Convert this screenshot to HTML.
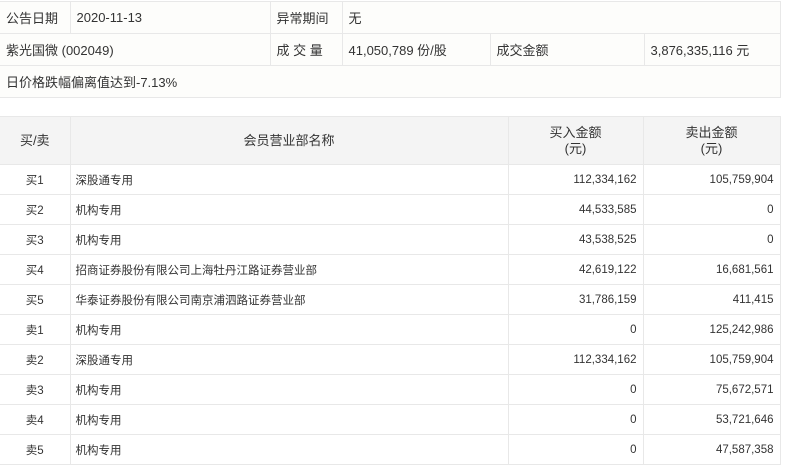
<!DOCTYPE html>
<html><head><meta charset="utf-8"><style>
body{margin:0;background:#fff;width:787px;height:470px;overflow:hidden;font-family:"Liberation Sans","Noto Sans CJK SC",sans-serif;color:#333;}
table{border-collapse:collapse;position:absolute;left:0;table-layout:fixed;}
td{border:1px solid #e8e8e8;padding:0;white-space:nowrap;overflow:hidden;}
#t1{top:1px;width:780px;background:#fdfdfb;font-size:13px;}
#t1 td{height:31px;padding-left:6px;}
#t2{top:116px;width:780px;font-size:11.5px;}
#t2 th{background:#f4f4f4;font-weight:normal;border:1px solid #e8e8e8;height:47px;padding:0;font-size:13px;line-height:16px;}
#t2 td{height:29px;}
.c{text-align:center}.r{text-align:right;padding-right:6px}.l{padding-left:5px}
</style></head><body>
<table id="t1">
<colgroup><col style="width:70px"><col style="width:200px"><col style="width:72px"><col style="width:148px"><col style="width:154px"><col style="width:136px"></colgroup>
<tr><td style="border-left:none">公告日期</td><td>2020-11-13</td><td>异常期间</td><td colspan="3">无</td></tr>
<tr><td colspan="2" style="border-left:none">紫光国微 (002049)</td><td>成 交 量</td><td>41,050,789 份/股</td><td>成交金额</td><td>3,876,335,116 元</td></tr>
<tr><td colspan="6" style="border-left:none">日价格跌幅偏离值达到-7.13%</td></tr>
</table>
<table id="t2">
<colgroup><col style="width:70px"><col style="width:438px"><col style="width:135px"><col style="width:137px"></colgroup>
<tr><th style="border-left:none">买/卖</th><th>会员营业部名称</th><th>买入金额<br>(元)</th><th>卖出金额<br>(元)</th></tr>
<tr><td class="c" style="border-left:none">买1</td><td class="l">深股通专用</td><td class="r">112,334,162</td><td class="r">105,759,904</td></tr>
<tr><td class="c" style="border-left:none">买2</td><td class="l">机构专用</td><td class="r">44,533,585</td><td class="r">0</td></tr>
<tr><td class="c" style="border-left:none">买3</td><td class="l">机构专用</td><td class="r">43,538,525</td><td class="r">0</td></tr>
<tr><td class="c" style="border-left:none">买4</td><td class="l">招商证券股份有限公司上海牡丹江路证券营业部</td><td class="r">42,619,122</td><td class="r">16,681,561</td></tr>
<tr><td class="c" style="border-left:none">买5</td><td class="l">华泰证券股份有限公司南京浦泗路证券营业部</td><td class="r">31,786,159</td><td class="r">411,415</td></tr>
<tr><td class="c" style="border-left:none">卖1</td><td class="l">机构专用</td><td class="r">0</td><td class="r">125,242,986</td></tr>
<tr><td class="c" style="border-left:none">卖2</td><td class="l">深股通专用</td><td class="r">112,334,162</td><td class="r">105,759,904</td></tr>
<tr><td class="c" style="border-left:none">卖3</td><td class="l">机构专用</td><td class="r">0</td><td class="r">75,672,571</td></tr>
<tr><td class="c" style="border-left:none">卖4</td><td class="l">机构专用</td><td class="r">0</td><td class="r">53,721,646</td></tr>
<tr><td class="c" style="border-left:none">卖5</td><td class="l">机构专用</td><td class="r">0</td><td class="r">47,587,358</td></tr>
</table>
</body></html>
